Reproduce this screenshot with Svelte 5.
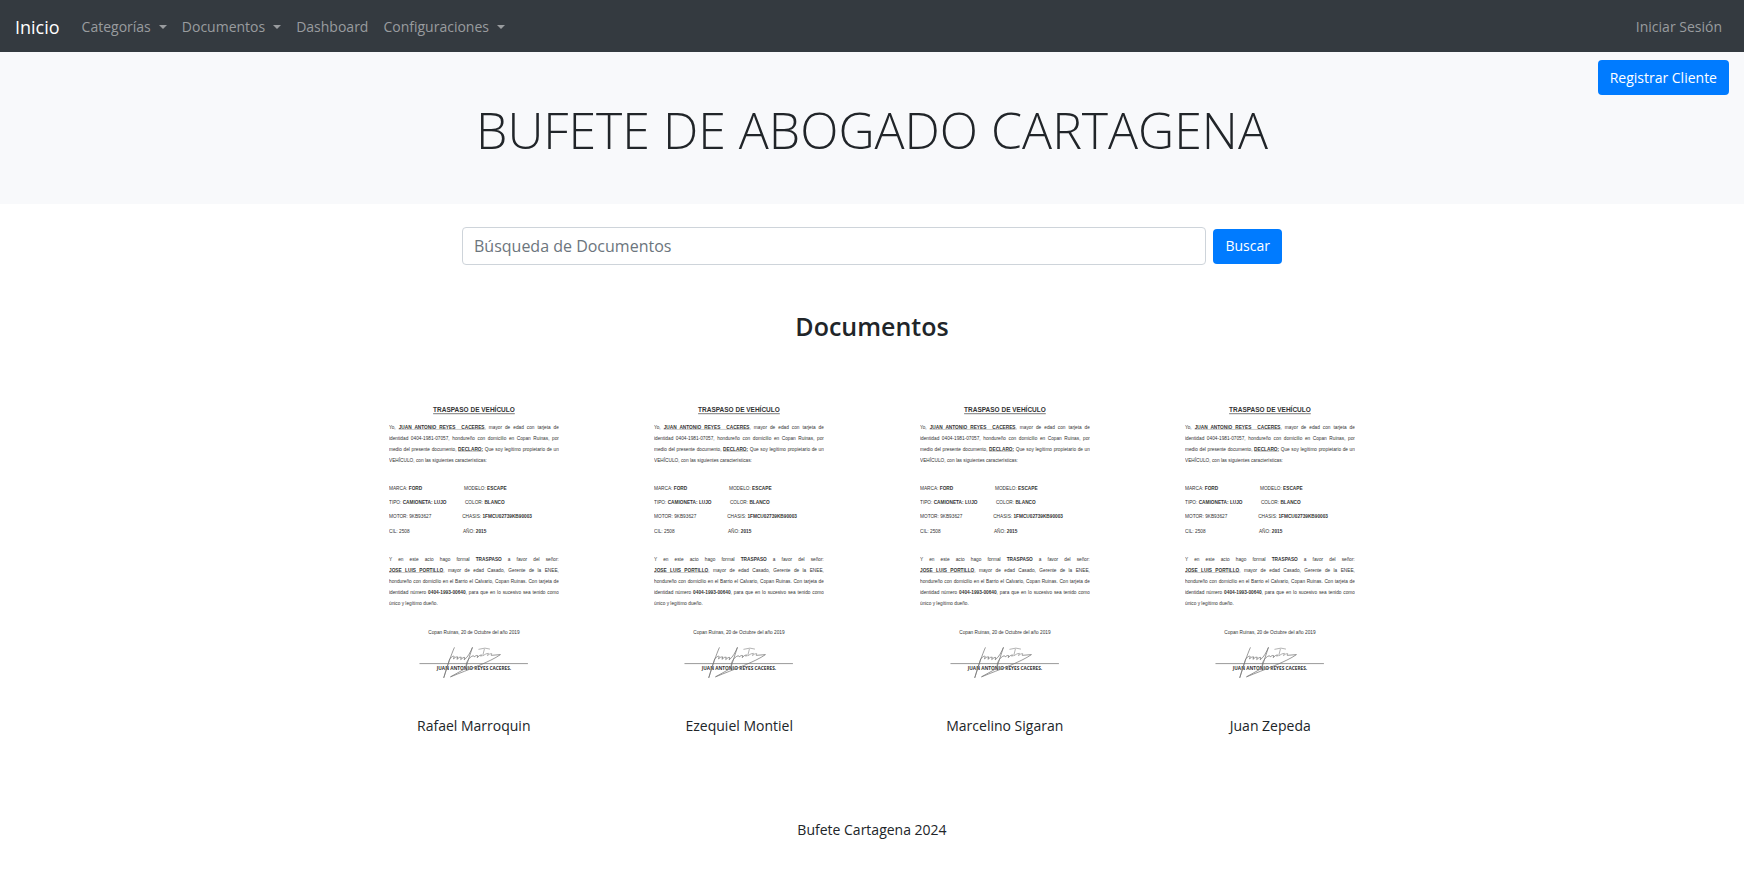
<script>
  const menu = [
    { label: 'Categorías', dropdown: true },
    { label: 'Documentos', dropdown: true },
    { label: 'Dashboard', dropdown: false },
    { label: 'Configuraciones', dropdown: true }
  ];

  const clients = ['Rafael Marroquin', 'Ezequiel Montiel', 'Marcelino Sigaran', 'Juan Zepeda'];

  // Vehicle data sheet, two columns per row
  const specs = [
    { y: 360, left: ['MARCA:', 'FORD', true], x: 300, right: ['MODELO:', 'ESCAPE', true] },
    { y: 417, left: ['TIPO:', 'CAMIONETA: LUJO', true], x: 304, right: ['COLOR:', 'BLANCO', true] },
    { y: 474, left: ['MOTOR:', '9KB93627', false], x: 293, right: ['CHASIS:', '1FMCU02739KB90003', true] },
    { y: 531, left: ['CIL:', '2508', false], x: 296, right: ['AÑO:', '2015', true] }
  ];

  let query = $state('');
</script>

<nav class="navbar" aria-label="Principal">
  <a class="brand" href="#inicio">Inicio</a>
  <ul class="menu">
    {#each menu as item}
      <li>
        {#if item.dropdown}
          <button type="button" class="link">{item.label}<span class="caret"></span></button>
        {:else}
          <a class="link" href="#dashboard">{item.label}</a>
        {/if}
      </li>
    {/each}
  </ul>
  <a class="link" href="#sesion">Iniciar Sesión</a>
</nav>

<header class="hero">
  <button type="button" class="btn register">Registrar Cliente</button>
  <h1>BUFETE DE ABOGADO CARTAGENA</h1>
</header>

<main>
  <form class="search" onsubmit={(e) => e.preventDefault()}>
    <input type="search" aria-label="Búsqueda de Documentos" placeholder="Búsqueda de Documentos" bind:value={query} />
    <button type="submit" class="btn">Buscar</button>
  </form>

  <h2>Documentos</h2>

  <div class="grid">
    {#each clients as client}
      <figure>
        <svg class="doc" viewBox="0 0 680 1120">
          <text class="title" x="340" y="50" text-anchor="middle">TRASPASO DE VEHÍCULO</text>
          <foreignObject x="0" y="87" width="680" height="190">
            <div class="para">
              <div class="line">Yo, <u>JUAN ANTONIO REYES&nbsp; CACERES</u>, mayor de edad con tarjeta de</div>
              <div class="line">identidad 0404-1981-07057, hondureño con domicilio en Copan Ruinas, por</div>
              <div class="line">medio del presente documento, <u>DECLARO:</u> Que soy legítimo propietario de un</div>
              <div>VEHÍCULO, con las siguientes características:</div>
            </div>
          </foreignObject>
          {#each specs as row}
            <text x="0" y={row.y}>{row.left[0]} <tspan class:bold={row.left[2]}>{row.left[1]}</tspan></text>
            <text x={row.x} y={row.y}>{row.right[0]} <tspan class:bold={row.right[2]}>{row.right[1]}</tspan></text>
          {/each}
          <foreignObject x="0" y="618" width="680" height="230">
            <div class="para">
              <div class="line">Y en este acto hago formal <b>TRASPASO</b> a favor del señor:</div>
              <div class="line"><u>JOSE LUIS PORTILLO</u>, mayor de edad Casado, Gerente de la ENEE,</div>
              <div class="line">hondureño con domicilio en el Barrio el Calvario, Copan Ruinas. Con tarjeta de</div>
              <div class="line">identidad número <b>0404-1993-00640</b>, para que en lo sucesivo sea tenido como</div>
              <div>único y legítimo dueño.</div>
            </div>
          </foreignObject>
          <text x="340" y="937" text-anchor="middle">Copan Ruinas, 20 de Octubre del año 2019</text>
          <path class="rule" d="M122 1055H556" />
          <text class="bold signer" x="340" y="1081" text-anchor="middle">JUAN ANTONIO REYES CACERES.</text>
          <path
            class="ink"
            d="M262 990C250 1017 234 1062 219 1112L243 1036C252 1027 259 1022 261 1027L258 1036Q268 1026 275 1028L272 1038Q282 1027 289 1029L287 1039Q298 1028 303 1030L301 1040C317 1028 326 1008 334 990C326 1015 315 1045 306 1078L311 1050Q320 1030 331 1026Q340 1020 341 1028Q350 1020 355 1023L353 1031Q363 1020 370 1020L368 1027"
          />
          <path class="ink faint" d="M358 998L384 993L404 997M382 996L375 1024Q390 1013 398 1014L394 1023Q404 1014 411 1015L409 1022" />
          <path class="ink" d="M409 1022L446 1019C405 1048 320 1078 246 1108L300 1078" />
        </svg>
        <figcaption>{client}</figcaption>
      </figure>
    {/each}
  </div>
</main>

<footer>Bufete Cartagena 2024</footer>

<style>
  :global(body) {
    margin: 0;
    background: #fff;
    color: #212529;
    font-family: 'Open Sans', 'Noto Sans', sans-serif;
    font-size: 14px;
    line-height: 22px;
  }

  button,
  input {
    font: inherit;
  }

  .navbar {
    display: flex;
    align-items: center;
    box-sizing: border-box;
    min-height: 52px;
    padding: 8px 22px 7px 15px;
    background: #343a40;
  }

  .brand {
    margin-right: 22px;
    color: #fff;
    font-size: 18px;
    line-height: 28px;
    text-decoration: none;
  }

  .menu {
    display: flex;
    flex: 1;
    gap: 15px;
    margin: 0;
    padding: 0;
    list-style: none;
  }

  .link {
    display: flex;
    align-items: center;
    padding: 0;
    border: 0;
    background: none;
    color: #999c9f;
    text-decoration: none;
    cursor: pointer;
  }

  .caret {
    margin-left: 8px;
    border: 4px solid transparent;
    border-top-color: currentColor;
    border-bottom: 0;
  }

  .hero {
    display: flex;
    flex-direction: column;
    padding: 8px 15px 42px;
    background: #f8f9fb;
  }

  h1 {
    margin: 4px 0 0;
    font-size: 50px;
    font-weight: 300;
    line-height: 63px;
    text-align: center;
  }

  .btn {
    height: 35px;
    padding: 0 12px;
    border: 0;
    border-radius: 4px;
    background: #007bff;
    color: #fff;
    cursor: pointer;
  }

  .register {
    align-self: flex-end;
  }

  main {
    max-width: 1062px;
    margin: 0 auto;
  }

  .search {
    display: flex;
    align-items: center;
    gap: 7px;
    max-width: 820px;
    margin: 23px auto 0;
  }

  .search input {
    flex: 1;
    min-width: 0;
    height: 38px;
    box-sizing: border-box;
    padding: 0 11px;
    border: 1px solid #ced4da;
    border-radius: 4px;
    background: #fff;
    color: #495057;
    font-size: 16px;
    appearance: none;
  }

  .search input::placeholder {
    color: #6c757d;
    opacity: 1;
  }

  h2 {
    margin: 44px 0 0;
    font-size: 25px;
    font-weight: 600;
    line-height: 34px;
    text-align: center;
  }

  .grid {
    display: grid;
    grid-template-columns: repeat(4, 1fr);
    margin-top: 57px;
  }

  figure {
    display: flex;
    flex-direction: column;
    align-items: center;
    gap: 35px;
    margin: 0;
  }

  .doc {
    width: 64%;
    fill: #333;
    color: #333;
    font-family: 'Liberation Sans', Arial, sans-serif;
    font-size: 19px;
  }

  .para {
    font-size: 19px;
    line-height: 44px;
    white-space: nowrap;
  }

  .line {
    text-align: justify;
    text-align-last: justify;
  }

  .para u,
  .bold,
  .title {
    font-weight: 700;
  }

  .title {
    font-size: 26px;
    text-decoration: underline;
  }

  .signer {
    font-family: 'Open Sans', sans-serif;
    font-size: 19px;
  }

  .rule,
  .ink {
    fill: none;
    stroke: #777;
    stroke-width: 3;
  }

  .faint {
    stroke: #999;
  }

  footer {
    margin: 82px 0 50px;
    text-align: center;
  }
</style>
